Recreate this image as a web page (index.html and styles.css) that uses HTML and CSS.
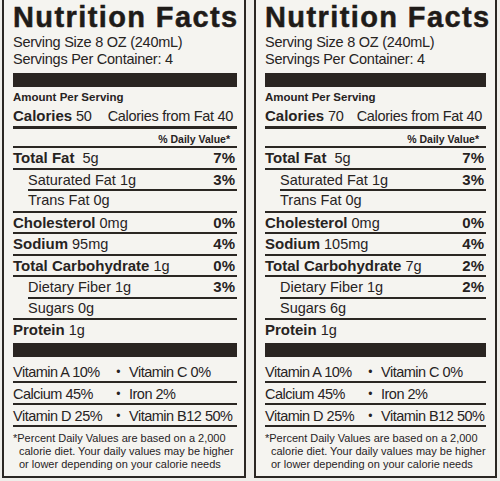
FILE: index.html
```html
<!DOCTYPE html>
<html lang="en">
<head>
    <meta charset="UTF-8">
    <meta name="viewport" content="width=device-width, initial-scale=1.0">
    <title>Nutrition Facts</title>
    <link rel="stylesheet" href="styles.css">
</head>
<body>
    <div class="labels">
        <!-- 左边: 50 卡 -->
        <section class="label">
            <h1 class="label-title">Nutrition Facts</h1>
            <p class="serving">Serving Size 8 OZ (240mL)<br>Servings Per Container: 4</p>
            <div class="bar"></div>
            <p class="amount">Amount Per Serving</p>
            <div class="row calories"><span><b>Calories</b> 50</span><span>Calories from Fat 40</span></div>
            <div class="row dv">% Daily Value*</div>
            <div class="row"><span><b>Total Fat</b>&nbsp; 5g</span><b>7%</b></div>
            <div class="row short"><span>Saturated Fat 1g</span><b>3%</b></div>
            <div class="row sub"><span>Trans Fat 0g</span></div>
            <div class="row"><span><b>Cholesterol</b> 0mg</span><b>0%</b></div>
            <div class="row"><span><b>Sodium</b> 95mg</span><b>4%</b></div>
            <div class="row"><span><b>Total Carbohydrate</b> 1g</span><b>0%</b></div>
            <div class="row short"><span>Dietary Fiber 1g</span><b>3%</b></div>
            <div class="row sub"><span>Sugars 0g</span></div>
            <div class="row last"><span><b>Protein</b> 1g</span></div>
            <div class="bar"></div>
            <div class="vitamins">
                <div class="vit-row"><span>Vitamin A 10%</span><span class="dot">&bull;</span><span>Vitamin C 0%</span></div>
                <div class="vit-row"><span>Calcium 45%</span><span class="dot">&bull;</span><span>Iron 2%</span></div>
                <div class="vit-row"><span>Vitamin D 25%</span><span class="dot">&bull;</span><span>Vitamin B12 50%</span></div>
            </div>
            <p class="footnote">*Percent Daily Values are based on a 2,000<br>calorie diet. Your daily values may be higher<br>or lower depending on your calorie needs</p>
        </section>

        <!-- 右边: 70 卡 -->
        <section class="label label-right">
            <h1 class="label-title">Nutrition Facts</h1>
            <p class="serving">Serving Size 8 OZ (240mL)<br>Servings Per Container: 4</p>
            <div class="bar"></div>
            <p class="amount">Amount Per Serving</p>
            <div class="row calories"><span><b>Calories</b> 70</span><span>Calories from Fat 40</span></div>
            <div class="row dv">% Daily Value*</div>
            <div class="row"><span><b>Total Fat</b>&nbsp; 5g</span><b>7%</b></div>
            <div class="row short"><span>Saturated Fat 1g</span><b>3%</b></div>
            <div class="row sub"><span>Trans Fat 0g</span></div>
            <div class="row"><span><b>Cholesterol</b> 0mg</span><b>0%</b></div>
            <div class="row"><span><b>Sodium</b> 105mg</span><b>4%</b></div>
            <div class="row"><span><b>Total Carbohydrate</b> 7g</span><b>2%</b></div>
            <div class="row short"><span>Dietary Fiber 1g</span><b>2%</b></div>
            <div class="row sub"><span>Sugars 6g</span></div>
            <div class="row last"><span><b>Protein</b> 1g</span></div>
            <div class="bar"></div>
            <div class="vitamins">
                <div class="vit-row"><span>Vitamin A 10%</span><span class="dot">&bull;</span><span>Vitamin C 0%</span></div>
                <div class="vit-row"><span>Calcium 45%</span><span class="dot">&bull;</span><span>Iron 2%</span></div>
                <div class="vit-row"><span>Vitamin D 25%</span><span class="dot">&bull;</span><span>Vitamin B12 50%</span></div>
            </div>
            <p class="footnote">*Percent Daily Values are based on a 2,000<br>calorie diet. Your daily values may be higher<br>or lower depending on your calorie needs</p>
        </section>
    </div>
</body>
</html>
```

FILE: styles.css
```css
* {
    margin: 0;
    padding: 0;
    box-sizing: border-box;
}

body {
    font-family: "Liberation Sans", Arial, sans-serif;
    background-color: #efeeea;
    color: #27231f;
}

.labels {
    display: flex;
    gap: 8px;
    padding-left: 2px;
}

.label {
    width: 244px;
    height: 478px;
    padding: 1px 7px 0 9px;
    background-color: #f5f4f0;
    border: 2px solid #2b2723;
    border-top: none;
}

.label-right {
    width: 243px;
    padding-left: 9px;
    padding-right: 9px;
}

.label-title {
    font-size: 29px;
    line-height: 33.3px;
    font-weight: bold;
    letter-spacing: 1.4px;
    white-space: nowrap;
    color: #1f1b18;
    -webkit-text-stroke: 0.5px #1f1b18;
}

.serving {
    font-size: 14.5px;
    line-height: 17px;
    letter-spacing: -0.25px;
}

.bar {
    height: 14px;
    margin-top: 5px;
    background-color: #2a2521;
}

.amount {
    margin-top: 2.6px;
    font-size: 11.5px;
    line-height: 14px;
    font-weight: bold;
}

.row {
    display: flex;
    justify-content: space-between;
    align-items: baseline;
    height: 21.5px;
    line-height: 19.5px;
    padding-right: 2px;
    font-size: 14.5px;
    white-space: nowrap;
    border-bottom: 2px solid #2b2723;
}

.row b {
    font-size: 15px;
}

.row.calories {
    height: auto;
    padding: 3px 4px 1px 0;
    line-height: 18px;
    font-size: 14.5px;
    letter-spacing: -0.3px;
    border-bottom-width: 3px;
}

.row.calories b {
    letter-spacing: 0;
}

.row.dv {
    height: auto;
    justify-content: flex-end;
    padding: 3.5px 7px 0 0;
    font-size: 10.5px;
    line-height: 14px;
    font-weight: bold;
}

.row.short {
    margin-left: 15px;
}

.row.sub {
    padding-left: 15px;
}

.row.last {
    height: 19.5px;
    border-bottom: none;
}

.row.last + .bar {
    margin-top: 3px;
}

.vitamins {
    padding-top: 4.5px;
}

.vit-row {
    display: grid;
    grid-template-columns: 94px 14px 1fr;
    column-gap: 4px;
    padding-top: 2px;
    font-size: 14.5px;
    line-height: 18px;
    letter-spacing: -0.5px;
    white-space: nowrap;
    border-bottom: 2px solid #2b2723;
}

.dot {
    text-align: center;
    font-size: 12px;
}

.footnote {
    padding-top: 5px;
    padding-left: 6px;
    text-indent: -6px;
    font-size: 11px;
    line-height: 12.7px;
    white-space: nowrap;
}
```
